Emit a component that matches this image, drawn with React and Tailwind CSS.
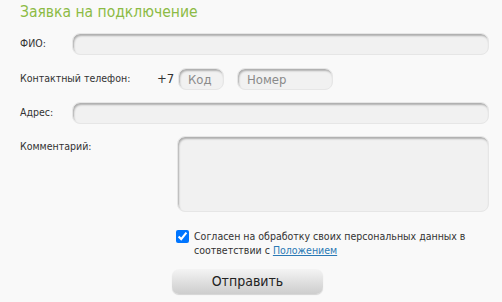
import React from 'react'

const inputCls =
  'h-[22px] rounded-[8px] bg-[#f1f1f1] border border-[#e6e6e6] shadow-[inset_1px_2px_2px_rgba(0,0,0,0.28)] outline-none px-[9px] text-[13px] text-[#333] placeholder:text-[#8a8a8a]'

function App() {
  return (
    <div
      className="w-[502px] h-[302px] bg-[#f9f9f9] pl-[20px] pr-[13px] text-[#333] overflow-hidden"
      style={{ fontFamily: '"DejaVu Sans Condensed", "DejaVu Sans", sans-serif' }}
    >
      {/* title */}
      <h2 className="text-[15.5px] leading-[22px] pt-[1px] text-[#8cbb45]">Заявка на подключение</h2>

      <div className="mt-[10px] flex items-center">
        <span className="w-[52px] text-[10.5px]">ФИО:</span>
        <input className={inputCls + ' flex-1'} />
      </div>

      <div className="mt-[13px] flex items-center">
        <span className="w-[137px] text-[10.5px]">Контактный телефон:</span>
        <span className="w-[21px] text-[13px]">+7</span>
        <input className={inputCls + ' w-[46px]'} placeholder="Код" />
        <input className={inputCls + ' w-[96px] ml-[13px]'} placeholder="Номер" />
      </div>

      <div className="mt-[12px] flex items-center">
        <span className="w-[52px] text-[10.5px]">Адрес:</span>
        <input className={inputCls + ' flex-1'} />
      </div>

      <div className="mt-[12px] flex items-start">
        <span className="w-[157px] text-[10.5px] pt-[3px]">Комментарий:</span>
        <textarea className={inputCls.replace('h-[22px]', 'h-[76px]') + ' flex-1 resize-none'} />
      </div>

      <div className="mt-[17px] flex items-start pl-[156px]">
        <input type="checkbox" defaultChecked className="w-[13px] h-[13px] mt-[1px] shrink-0" />
        <p className="ml-[5px] text-[10.5px] leading-[14px] text-[#333]">
          Согласен на обработку своих персональных данных в соответствии с{' '}
          <a href="#" className="text-[#2b79b5] underline">Положением</a>
        </p>
      </div>

      <div className="mt-[12px] pl-[152px]">
        <button className="w-[151px] h-[25px] rounded-[7px] bg-gradient-to-b from-[#f4f4f4] to-[#cdcdcd] shadow-[0_1px_1px_rgba(0,0,0,0.15)] text-[14px] text-[#222]">
          Отправить
        </button>
      </div>
    </div>
  )
}

export default App
